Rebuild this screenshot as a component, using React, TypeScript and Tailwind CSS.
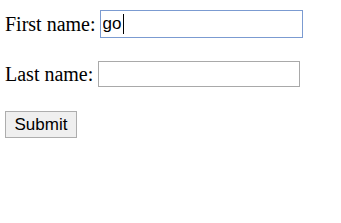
import React, { useEffect, useRef } from 'react';

const App: React.FC = () => {
  const firstRef = useRef<HTMLInputElement>(null);

  useEffect(() => {
    const el = firstRef.current;
    if (el) {
      el.focus();
      el.setSelectionRange(el.value.length, el.value.length);
    }
  }, []);

  return (
    <div className="w-[341px] h-[223px] bg-white text-black font-['Liberation_Serif',serif] text-[20px] leading-none">
      <form className="flex flex-col pt-[10px] pl-[5px]" onSubmit={(e) => e.preventDefault()}>
        {/* First name */}
        <div className="flex items-center h-[28px]">
          <label htmlFor="fname" className="mr-[4px]">First name:</label>
          <span className="relative flex">
            <input
              ref={firstRef}
              id="fname"
              defaultValue="go"
              className="w-[203px] h-[28px] px-[2px] border border-[#7b9bd1] outline-none bg-white font-['Liberation_Sans',Arial,sans-serif] text-[17px] text-black caret-transparent"
            />
            {/* text caret, drawn so it shows in a still */}
            <span className="absolute left-[23px] top-[4px] w-px h-[20px] bg-black pointer-events-none" />
          </span>
        </div>

        {/* Last name */}
        <div className="flex items-center h-[26px] mt-[23px]">
          <label htmlFor="lname" className="mr-[5px]">Last name:</label>
          <input
            id="lname"
            className="w-[202px] h-[26px] px-[2px] border border-[#a9a9a9] outline-none bg-white font-['Liberation_Sans',Arial,sans-serif] text-[17px]"
          />
        </div>

        {/* Submit */}
        <div className="flex mt-[24px]">
          <button
            type="submit"
            className="w-[72px] h-[27px] border border-[#adadad] bg-[#efefef] font-['Liberation_Sans',Arial,sans-serif] text-[17px] text-black leading-none"
          >
            Submit
          </button>
        </div>
      </form>
    </div>
  );
};

export default App;
